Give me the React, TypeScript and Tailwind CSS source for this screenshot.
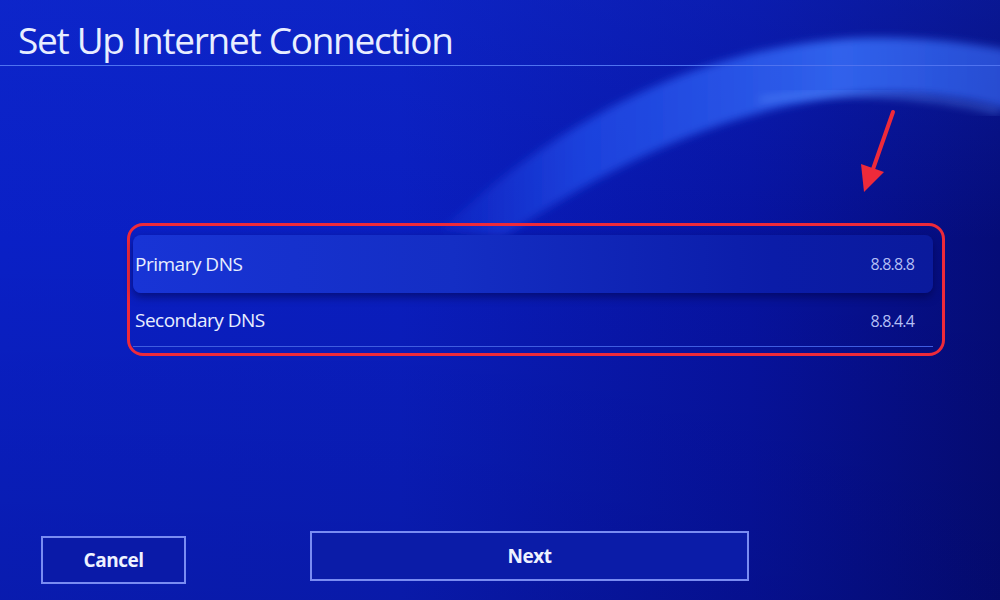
import React from "react";

export default function App() {
  return (
    <div
      className="relative w-[1000px] h-[600px] overflow-hidden"
      style={{ fontFamily: '"Open Sans", "Noto Sans", sans-serif' }}
    >
      {/* background */}
      <div className="absolute inset-0 bg-[linear-gradient(90deg,#0a20c6_0%,#0a1ebf_40%,#0713a0_75%,#050c78_100%)]" />
      <div className="absolute inset-0 bg-[linear-gradient(180deg,rgba(20,50,210,0.3)_0%,rgba(0,0,0,0)_40%,rgba(0,0,40,0.15)_100%)]" />
      <svg className="absolute inset-0" width="1000" height="600" viewBox="0 0 1000 600">
        <defs>
          <linearGradient id="arcg" x1="0" y1="0" x2="1" y2="0">
            <stop offset="0" stopColor="#2a5cff" stopOpacity="0.1" />
            <stop offset="0.25" stopColor="#2a60ff" stopOpacity="0.55" />
            <stop offset="0.7" stopColor="#3a74ff" stopOpacity="0.8" />
            <stop offset="1" stopColor="#3a70ff" stopOpacity="0.6" />
          </linearGradient>
          <filter id="blur" x="-20%" y="-20%" width="140%" height="140%">
            <feGaussianBlur stdDeviation="4" />
          </filter>
        </defs>
        <path
          d="M440 230 C 560 120, 700 45, 860 38 C 930 36, 980 45, 1010 50 L 1010 110 C 960 95, 900 90, 850 95 C 720 110, 600 170, 500 240 Z"
          fill="url(#arcg)"
          filter="url(#blur)"
        />
        <path
          d="M760 100 C 830 90, 920 92, 1000 112"
          stroke="#6a9bff"
          strokeOpacity="0.7"
          strokeWidth="3"
          fill="none"
          filter="url(#blur)"
        />
        {/* red arrow */}
        <line x1="893" y1="112" x2="872" y2="172" stroke="#ee2a3a" strokeWidth="4" strokeLinecap="round" />
        <polygon points="864,192 861,164 884,172" fill="#ee2a3a" />
      </svg>

      <div className="relative flex flex-col h-full">
        {/* header */}
        <div className="h-[66px] border-b border-[#4f73f0] flex items-end pl-[18px] pb-[7px]">
          <h1 className="text-[37px] leading-none text-[#e8eeff] font-normal tracking-[-1.3px]">
            Set Up Internet Connection
          </h1>
        </div>

        {/* list */}
        <div className="mt-[157px] ml-[127px] w-[818px] h-[133px] border-[3px] border-[#ee2a3a] rounded-[16px] px-[3px] pt-[9px] flex flex-col">
          <div className="h-[58px] flex items-center justify-between px-[2px] rounded-[8px] bg-[linear-gradient(90deg,#1834d6_0%,#142ec4_40%,#0b1ca8_80%,#0a1a9c_100%)] shadow-[0_4px_8px_rgba(0,0,60,0.5)] mr-[6px]">
            <span className="text-[19px] text-[#e8eeff] tracking-[-0.5px]">Primary DNS</span>
            <span className="text-[16px] text-[#b4bff5] mr-[17px] tracking-[-0.8px]">8.8.8.8</span>
          </div>
          <div className="h-[52px] flex items-center justify-between px-[2px] mt-[2px] border-b border-[#3f5de0] mr-[6px]">
            <span className="text-[19px] text-[#e8eeff] tracking-[-0.5px]">Secondary DNS</span>
            <span className="text-[16px] text-[#b4bff5] mr-[17px] tracking-[-0.8px]">8.8.4.4</span>
          </div>
        </div>

        {/* buttons */}
        <div className="mt-auto mb-[16px] flex items-end pl-[41px]">
          <button className="w-[145px] h-[48px] border-2 border-[#7a8cf2] bg-[#0a1aa8] text-[#eef2ff] text-[19px] font-bold tracking-[-0.5px]">
            Cancel
          </button>
          <button className="ml-[124px] mb-[3px] w-[439px] h-[50px] border-2 border-[#7a8cf2] bg-[#0b1ca8] text-[#eef2ff] text-[19px] font-bold tracking-[-0.5px]">
            Next
          </button>
        </div>
      </div>
    </div>
  );
}
